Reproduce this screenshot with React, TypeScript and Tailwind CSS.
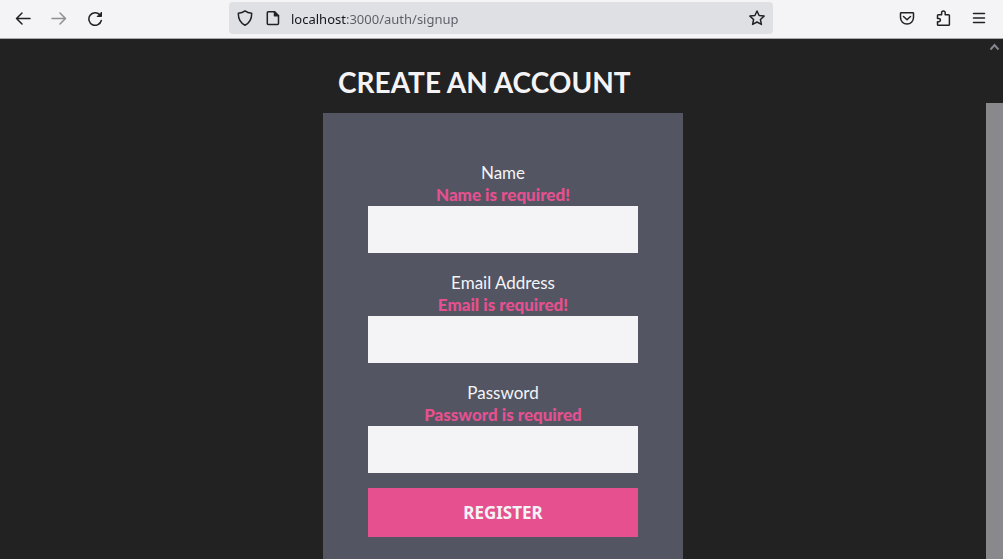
import type { InputHTMLAttributes, ReactNode } from "react";

function Icon({ children, className = "" }: { children: ReactNode; className?: string }) {
  return (
    <svg
      viewBox="0 0 16 16"
      className={`size-4 shrink-0 fill-none stroke-current ${className}`}
      strokeWidth="1.5"
      strokeLinecap="round"
      strokeLinejoin="round"
      aria-hidden="true"
    >
      {children}
    </svg>
  );
}

function ToolButton({ label, className, children }: { label: string; className: string; children: ReactNode }) {
  return (
    <button type="button" aria-label={label} className={`flex h-8 shrink-0 items-center justify-center ${className}`}>
      {children}
    </button>
  );
}

function BrowserBar() {
  return (
    <header className="flex shrink-0 items-start border-b border-[#a9a9ae] bg-[#f4f4f7] pt-0.5 pb-1 text-[#222225]">
      <nav aria-label="History" className="flex w-[229px] shrink-0 pl-[5px]">
        <ToolButton label="Back" className="w-9">
          <Icon>
            <path d="M15 8.5H1.5M7 3L1.5 8.5 7 14" />
          </Icon>
        </ToolButton>
        <ToolButton label="Forward" className="w-9 text-[#8f8f93]">
          <Icon>
            <path d="M1 8.5h13.5M9 3l5.500 5.500L9 14" />
          </Icon>
        </ToolButton>
        <ToolButton label="Reload" className="w-9">
          <Icon>
            <path d="M12.800 4.700A6.300 6.300 0 1 0 14.300 10.500" />
            <path d="M14.500 2.500v4H10.500z" fill="currentColor" strokeWidth="1" />
          </Icon>
        </ToolButton>
      </nav>

      <div className="flex min-w-0 flex-1 items-center rounded bg-[#dfe0e4]">
        <ToolButton label="Tracking protection" className="w-8">
          <Icon>
            <path d="M8 .9C6.300 2.200 3.700 3 1.300 3.200c-.1 5.600 1.700 9.700 6.700 12 5-2.300 6.800-6.400 6.700-12C12.300 3 9.700 2.200 8 .9z" />
          </Icon>
        </ToolButton>
        <ToolButton label="Site information" className="w-6">
          <Icon>
            <path d="M3.300 1.800h6.200l4 4v7.700a1 1 0 0 1-1 1H3.300a1 1 0 0 1-1-1V2.800a1 1 0 0 1 1-1z" />
            <path d="M9.500 1.800l4 4h-4z" fill="currentColor" />
          </Icon>
        </ToolButton>
        <input
          type="text"
          aria-label="Address"
          defaultValue="localhost:3000/auth/signup"
          className="ml-1.5 h-8 min-w-0 flex-1 bg-[linear-gradient(90deg,#15141a_55px,#5b5b66_55px)] bg-clip-text pt-0.5 font-['Noto_Sans','Open_Sans',sans-serif] text-[13px] text-transparent caret-black outline-none"
        />
        <ToolButton label="Bookmark this page" className="w-8">
          <Icon>
            <path d="M8 1l2.100 4.500 5 .6-3.700 3.400 1 4.900L8 12l-4.400 2.400 1-4.900L.9 6.100l5-.6z" />
          </Icon>
        </ToolButton>
      </div>

      <div className="flex w-[230px] shrink-0 justify-end pr-1.5">
        <ToolButton label="Save to Pocket" className="w-9">
          <Icon>
            <path d="M2.200 2.700h11.600a.7.7 0 0 1 .7.7v4.200a6.500 6.500 0 0 1-13 0V3.400a.7.7 0 0 1 .7-.7z" />
            <path d="M4.500 6.500L8 9.800l3.500-3.300" />
          </Icon>
        </ToolButton>
        <ToolButton label="Extensions" className="w-9">
          <Icon>
            <path d="M3.300 4.800h3.300V2.700a1.800 1.800 0 0 1 3.600 0v2.100h3.400a.8.8 0 0 1 .8.800v8.800a.8.8 0 0 1-.8.8H3.300a.8.8 0 0 1-.8-.8v-2.600h1.200a1.700 1.700 0 0 0 0-3.400H2.500V5.600a.8.8 0 0 1 .8-.8z" />
          </Icon>
        </ToolButton>
        <ToolButton label="Menu" className="w-9">
          <Icon>
            <path d="M2.500 3.500h11M2.500 8h11M2.500 12.500h11" />
          </Icon>
        </ToolButton>
      </div>
    </header>
  );
}

type FieldProps = InputHTMLAttributes<HTMLInputElement> & { id: string; label: string; error: string };

function Field({ id, label, error, ...input }: FieldProps) {
  return (
    <div className="flex flex-col text-center text-[17px] leading-[22px]">
      <label htmlFor={id}>{label}</label>
      <p id={`${id}-error`} className="font-black text-[#e6508f]">
        {error}
      </p>
      <input
        id={id}
        aria-invalid="true"
        aria-describedby={`${id}-error`}
        className="h-[47px] bg-[#f4f4f7] px-3 text-[#222225] outline-none"
        {...input}
      />
    </div>
  );
}

function ScrollTrack() {
  return (
    <div aria-hidden="true" className="flex w-[17px] shrink-0 flex-col">
      <svg viewBox="0 0 16 16" className="size-4 fill-none stroke-[#85858c]" strokeWidth="2">
        <path d="M4.500 10.500L8.500 6l4 4.500" />
      </svg>
      <div className="mt-12 flex-1 bg-[#88888d]" />
    </div>
  );
}

export default function App() {
  return (
    <div className="flex h-screen flex-col bg-[#222222] font-['Lato',sans-serif]">
      <BrowserBar />
      <div className="flex min-h-0 flex-1">
        <main className="flex min-w-0 flex-1 justify-center overflow-hidden pl-5 text-[#f4f4f7]">
          <div className="flex w-[360px] flex-col">
            <h1 className="px-[15px] pt-[25px] pb-[13px] text-[28px] leading-9 font-bold whitespace-nowrap">
              CREATE AN ACCOUNT
            </h1>
            <form noValidate className="flex flex-1 flex-col gap-[19px] bg-[#535563] px-[45px] py-[49px]">
              <Field id="name" label="Name" error="Name is required!" type="text" />
              <Field id="email" label="Email Address" error="Email is required!" type="email" />
              <div className="flex flex-col gap-[15px]">
                <Field id="password" label="Password" error="Password is required" type="password" />
                <button
                  type="submit"
                  className="h-[49px] bg-[#e6508f] font-['Noto_Sans','Open_Sans',sans-serif] text-[17px] font-bold"
                >
                  REGISTER
                </button>
              </div>
            </form>
          </div>
        </main>
        <ScrollTrack />
      </div>
    </div>
  );
}
